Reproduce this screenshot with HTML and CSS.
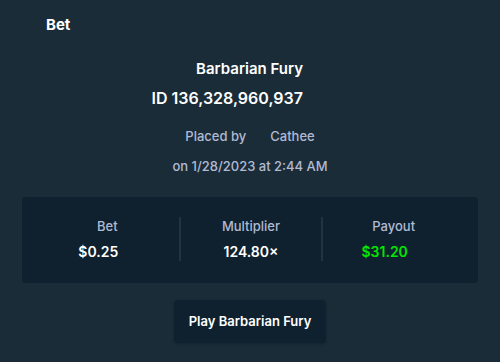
FILE: index.html
```html
<!DOCTYPE html>
<html lang="en">
  <head>
    <meta charset="utf-8" />
    <title>Bet</title>
    <link rel="stylesheet" href="styles.css">
  </head>
  <body>
    <div class="modal">
      <h1 class="modal__title">Bet</h1>

      <div class="bet-head">
        <div class="bet-head__game">Barbarian Fury</div>
        <div class="bet-head__id">ID 136,328,960,937</div>
      </div>

      <div class="bet-meta">
        <div class="bet-meta__by">
          <span>Placed by</span>
          <span class="bet-meta__user">Cathee</span>
        </div>
        <div class="bet-meta__date">on 1/28/2023 at 2:44 AM</div>
      </div>

      <!-- Stats panel -->
      <div class="stats">
        <div class="stats__col">
          <span class="stats__label">Bet</span>
          <span class="stats__value stats__value--coin">$0.25</span>
        </div>
        <div class="stats__col">
          <span class="stats__label">Multiplier</span>
          <span class="stats__value">124.80×</span>
        </div>
        <div class="stats__col">
          <span class="stats__label">Payout</span>
          <span class="stats__value stats__value--coin stats__value--win">$31.20</span>
        </div>
      </div>

      <div class="actions">
        <a href="#" class="btn">Play Barbarian Fury</a>
      </div>
    </div>
  </body>
</html>
```

FILE: styles.css
```css
/* Base */
html { box-sizing: border-box; }
*, *:before, *:after { box-sizing: inherit; }
body {
  margin: 0;
  font-family: "Inter", "Liberation Sans", Arial, sans-serif;
  background-color: #1a2c38;
  color: #fff;
  width: 500px;
  height: 362px;
  overflow: hidden;
}
a { text-decoration: none; }

.modal {
  padding: 15px 22px 0;
}
.modal__title {
  margin: 0 0 0 24px;
  font-size: 15px;
  font-weight: 700;
  line-height: 20px;
}

/* Header */
.bet-head {
  margin-top: 24px;
  padding-right: 175px;
  text-align: right;
  font-weight: 600;
}
.bet-head__game {
  font-size: 15px;
  line-height: 20px;
}
.bet-head__id {
  margin-top: 8px;
  font-size: 16px;
  line-height: 22px;
}

/* Meta */
.bet-meta {
  margin-top: 18px;
  color: #b1bad3;
  font-size: 13px;
  font-weight: 500;
  text-align: center;
}
.bet-meta__by {
  display: flex;
  justify-content: center;
  gap: 24px;
  line-height: 18px;
}
.bet-meta__date {
  margin-top: 12px;
  line-height: 18px;
}

/* Stats */
.stats {
  margin-top: 22px;
  display: grid;
  grid-template-columns: 1fr 1fr 1fr;
  padding: 20px 14px 22px;
  background-color: #0f212e;
  border-radius: 4px;
}
.stats__col {
  display: flex;
  flex-direction: column;
  align-items: center;
  gap: 8px;
}
.stats__col + .stats__col {
  border-left: 2px solid #1f3340;
}
.stats__label {
  color: #b1bad3;
  font-size: 13px;
  font-weight: 500;
  line-height: 18px;
}
.stats__value {
  font-size: 14px;
  font-weight: 600;
  line-height: 18px;
}
.stats__value--coin {
  padding-right: 18px;
}
.stats__value--win {
  color: #00e701;
}

/* Button */
.actions {
  display: flex;
  justify-content: center;
  margin-top: 17px;
}
.btn {
  display: inline-block;
  padding: 12px 15px 13px;
  background-color: #0f212e;
  color: #fff;
  border-radius: 4px;
  font-size: 13px;
  font-weight: 600;
  line-height: 18px;
  box-shadow: 0 1px 3px rgba(0, 0, 0, 0.2);
}
```
